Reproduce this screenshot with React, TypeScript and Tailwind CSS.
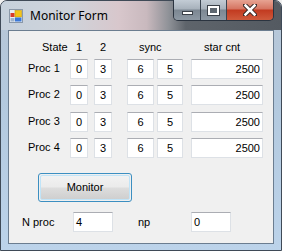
import React from "react"

const rows = [
  { name: "Proc 1", a: "0", b: "3", s1: "6", s2: "5", star: "2500" },
  { name: "Proc 2", a: "0", b: "3", s1: "6", s2: "5", star: "2500" },
  { name: "Proc 3", a: "0", b: "3", s1: "6", s2: "5", star: "2500" },
  { name: "Proc 4", a: "0", b: "3", s1: "6", s2: "5", star: "2500" },
]

function Box({ value, className }: { value: string; className: string }) {
  return (
    <div
      className={
        "h-[20px] bg-white border border-[#dde1e6] border-t-[#abadb3] flex items-center leading-none " +
        className
      }
    >
      {value}
    </div>
  )
}

function FormIcon() {
  return (
    <svg width="14" height="14" viewBox="0 0 14 14">
      <rect x="0.5" y="0.5" width="13" height="13" fill="#e8eef5" stroke="#8a98a8" />
      <rect x="1.5" y="4" width="4" height="4" fill="#d83a2a" />
      <rect x="6" y="1.5" width="6.5" height="6.5" fill="#f2c418" stroke="#c99a08" strokeWidth="0.6" />
      <rect x="6" y="8.5" width="6.5" height="4" fill="#3a78d8" />
      <rect x="1.5" y="9" width="4" height="3.5" fill="#9fb4cc" />
    </svg>
  )
}

export default function App() {
  return (
    <div className="w-[282px] h-[251px] overflow-hidden bg-[#f0f0f0]">
      <div className="w-[282px] h-[251px] flex flex-col rounded-t-[7px] border border-[#3f4a57] bg-[linear-gradient(180deg,#b7c6d6_0%,#b3c9de_40%,#bcd3ea_100%)] font-['Liberation_Sans',Arial,sans-serif]">
        {/* Title bar */}
        <div className="h-[29px] flex items-start relative rounded-t-[6px] bg-[linear-gradient(90deg,#c6d1dc_0%,#cfd3da_25%,#d8c7cc_42%,#c9b9be_52%,#8e9197_60%,#5e646b_66%,#545a61_100%)]">
          <div className="mt-[8px] ml-[8px]">
            <FormIcon />
          </div>
          <div className="mt-[6px] ml-[7px] text-[12px] text-black font-['Noto_Sans',sans-serif]">
            Monitor Form
          </div>
          <div className="ml-auto mr-[7px] -mt-[1px] flex h-[21px] rounded-b-[5px] border border-[#2b3440] border-t-0 overflow-hidden">
            <div className="w-[27px] h-full flex items-center justify-center border-r border-[#3a4450] bg-[linear-gradient(180deg,#c3ccd5_0%,#a7b1bb_45%,#7c8792_50%,#8d98a3_100%)]">
              <div className="w-[11px] h-[4px] mt-[6px] bg-white border border-[#3a4048]" />
            </div>
            <div className="w-[26px] h-full flex items-center justify-center border-r border-[#3a4450] bg-[linear-gradient(180deg,#c3ccd5_0%,#a7b1bb_45%,#7c8792_50%,#8d98a3_100%)]">
              <div className="w-[11px] h-[9px] border-[2px] border-white outline outline-1 outline-[#3a4048] bg-[#5e6770]" />
            </div>
            <div className="w-[46px] h-full flex items-center justify-center bg-[linear-gradient(180deg,#e7a392_0%,#d57461_45%,#c23a20_50%,#cf5a3c_100%)]">
              <svg width="14" height="12" viewBox="0 0 14 12">
                <path d="M2 1 L12 11 M12 1 L2 11" stroke="#3a2a28" strokeWidth="4.5" strokeLinecap="square" />
                <path d="M2.5 1.5 L11.5 10.5 M11.5 1.5 L2.5 10.5" stroke="#ffffff" strokeWidth="2.5" strokeLinecap="square" />
              </svg>
            </div>
          </div>
        </div>

        {/* Client area */}
        <div className="mx-[7px] h-[214px] border border-[#6b7d90] bg-[#f0f0f0] text-[11px] text-black relative">
          {/* Header row */}
          <div className="flex h-[13px] mt-[10px] leading-[13px]">
            <div className="w-[61px] pl-[33px]">State</div>
            <div className="w-[18px] text-center">1</div>
            <div className="w-[6px]" />
            <div className="w-[18px] text-center">2</div>
            <div className="w-[15px]" />
            <div className="w-[64px] pl-[12px]">sync</div>
            <div className="w-[72px] pl-[13px]">star cnt</div>
          </div>

          {/* Proc rows */}
          <div className="flex flex-col mt-[5px]">
            {rows.map((r, i) => (
              <div key={r.name} className={"flex items-center " + (i === 0 ? "" : i === 2 ? "mt-[7px]" : "mt-[6px]")}>
                <div className="w-[61px] pl-[19px] -mt-[2px]">{r.name}</div>
                <Box value={r.a} className="w-[18px] justify-center" />
                <div className="w-[6px]" />
                <Box value={r.b} className="w-[18px] justify-center" />
                <div className="w-[15px]" />
                <Box value={r.s1} className="w-[27px] justify-center" />
                <div className="w-[3px]" />
                <Box value={r.s2} className="w-[26px] justify-center" />
                <div className="w-[8px]" />
                <Box value={r.star} className="w-[72px] justify-end pr-[2px]" />
              </div>
            ))}
          </div>

          {/* Monitor button */}
          <div className="ml-[29px] mt-[15px] w-[94px] h-[29px] rounded-[3px] border border-[#3c8fc1] p-px">
            <div className="w-full h-full rounded-[2px] border border-[#c0e4f8] bg-[linear-gradient(180deg,#f2f2f2_0%,#ebebeb_48%,#dddddd_52%,#cfcfcf_100%)] flex items-center justify-center">
              Monitor
            </div>
          </div>

          {/* Bottom row */}
          <div className="flex items-center mt-[10px]">
            <div className="w-[64px] pl-[13px]">N proc</div>
            <Box value="4" className="w-[40px] pl-[2px]" />
            <div className="w-[78px] pl-[25px]">np</div>
            <Box value="0" className="w-[40px] pl-[2px]" />
          </div>
        </div>
      </div>
    </div>
  )
}
